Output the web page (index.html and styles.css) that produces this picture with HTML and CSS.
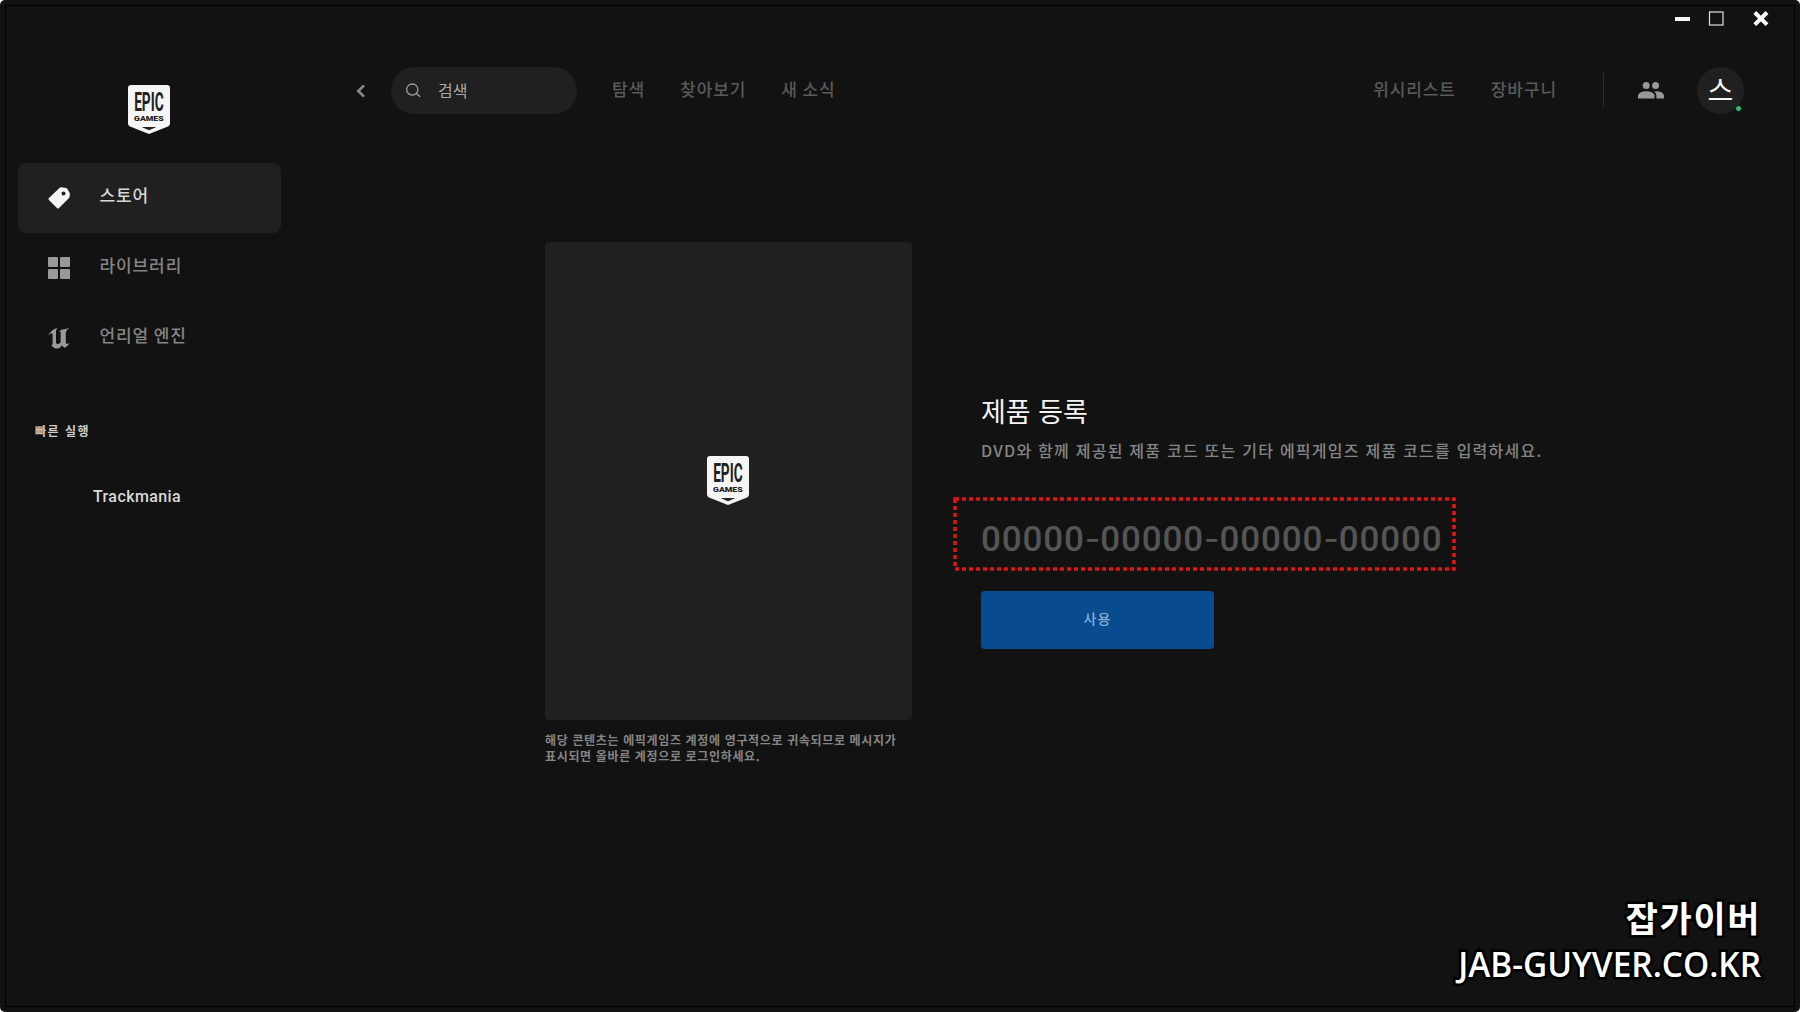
FILE: index.html
```html
<!DOCTYPE html>
<html lang="ko">
  <head>
    <meta charset="UTF-8" />
    <meta name="viewport" content="width=device-width, initial-scale=1.0" />
    <title>제품 등록</title>
    <link rel="stylesheet" href="styles.css">
  </head>
  <body>
    <div class="frame">
      <div class="window">
        <aside class="sidebar">
          <svg class="logo" width="42" height="49" viewBox="0 0 42 49">
            <path d="M3 0H39Q42 0 42 3V38.5Q42 40.5 40 41.4L21 49L2 41.4Q0 40.5 0 38.5V3Q0 0 3 0Z" fill="#f5f5f5" />
            <text class="logo-epic" x="6.2" y="25.6" textLength="29.4" lengthAdjust="spacingAndGlyphs">EPIC</text>
            <text class="logo-games" x="6" y="36" textLength="29.6" lengthAdjust="spacingAndGlyphs">GAMES</text>
            <path d="M13.5 42H28.5L21 45.2Z" fill="#222" />
          </svg>
          <nav class="side-nav">
            <a class="side-item active">
              <svg width="22" height="22" viewBox="0 0 22 22">
                <path fill="currentColor" fill-rule="evenodd" d="M12 0.6Q12.6 0.1 13.4 0.2L17.8 1Q18.8 1.2 19.4 2L21.5 5.6Q21.8 6.1 21.8 6.8L21.7 9.4Q21.6 10.3 21 11L10.8 21.2Q10 22 9.2 21.2L0.7 12.7Q0 12 0.7 11.2ZM15.5 4.6A2 2 0 1 0 15.5 8.6A2 2 0 1 0 15.5 4.6Z" />
              </svg>
              <span>스토어</span>
            </a>
            <a class="side-item">
              <svg width="22" height="22" viewBox="0 0 22 22" fill="currentColor">
                <rect x="0" y="0" width="10" height="10" rx="1" />
                <rect x="12" y="0" width="10" height="10" rx="1" />
                <rect x="0" y="12" width="10" height="10" rx="1" />
                <rect x="12" y="12" width="10" height="10" rx="1" />
              </svg>
              <span>라이브러리</span>
            </a>
            <a class="side-item">
              <svg width="22" height="22" viewBox="0 0 22 22">
                <path fill="currentColor" d="M0 9Q2.8 2.7 9.6 0.8Q8 2.5 8 4.5V15.7Q8.4 17 9.8 17Q11.6 16.9 12.6 15.3V5.4Q12.6 4.3 11.2 4.6Q13.4 2 16 2.2Q18.8 1.9 21.4 0.4Q17.8 3.5 17.8 6V15.2Q18 16.9 19.4 16.9Q20.5 16.7 22 15.4Q20.3 19 16.5 20.8L13.8 18.4Q12.5 21.2 9 21.6Q5.8 21.6 3.4 18.2Q4.6 18.2 4.6 16.6V8.3Q4.5 6.1 3.2 6.3Q1.5 6.8 0 9Z" />
              </svg>
              <span>언리얼 엔진</span>
            </a>
          </nav>
          <div class="quick-title">빠른 실행</div>
          <div class="quick-item">Trackmania</div>
        </aside>
        <main class="main">
          <div class="titlebar">
            <svg width="94" height="16" viewBox="0 0 94 16" fill="none">
              <path d="M0 9H15" stroke="#f5f5f5" stroke-width="4" />
              <rect x="34.5" y="2" width="13.5" height="13" stroke="#e0e0e0" stroke-width="1.2" />
              <path d="M79.8 2.5L92 14.7M92 2.5L79.8 14.7" stroke="#fff" stroke-width="4" />
            </svg>
          </div>
          <header class="header">
            <svg class="back" width="10" height="14" viewBox="0 0 10 14" fill="none">
              <path d="M8 1.3L2.3 7L8 12.7" stroke="#8a8a8a" stroke-width="2.6" />
            </svg>
            <div class="search">
              <svg width="15" height="15" viewBox="0 0 15 15" fill="none" stroke="#a0a0a0" stroke-width="1.3">
                <circle cx="6.3" cy="6.6" r="5.6" />
                <path d="M10.3 10.6L14.2 13.8" />
              </svg>
              <span>검색</span>
            </div>
            <nav class="top-nav">
              <a>탐색</a>
              <a>찾아보기</a>
              <a>새 소식</a>
            </nav>
            <nav class="user-nav">
              <a>위시리스트</a>
              <a>장바구니</a>
            </nav>
            <div class="divider"></div>
            <svg class="friends" width="26" height="17" viewBox="0 0 26 17" fill="#999">
              <circle cx="8.2" cy="3.6" r="3.5" />
              <circle cx="17.6" cy="3.6" r="3.5" />
              <path d="M0 16.6V13.2Q1.4 9.4 8.3 9.2Q15.2 9.4 16.5 13.2V16.6Z" />
              <path d="M16.2 9.4Q24.6 8.9 26 13.2V16.6H18.4V13.2Q18.3 11 16.2 9.4Z" />
            </svg>
            <div class="avatar">스<span class="status"></span></div>
          </header>
          <section class="content">
            <div class="product">
              <div class="cover">
                <svg width="42" height="49" viewBox="0 0 42 49">
                  <path d="M3 0H39Q42 0 42 3V38.5Q42 40.5 40 41.4L21 49L2 41.4Q0 40.5 0 38.5V3Q0 0 3 0Z" fill="#f5f5f5" />
                  <text class="logo-epic" x="6.2" y="25.6" textLength="29.4" lengthAdjust="spacingAndGlyphs">EPIC</text>
                  <text class="logo-games" x="6" y="36" textLength="29.6" lengthAdjust="spacingAndGlyphs">GAMES</text>
                  <path d="M13.5 42H28.5L21 45.2Z" fill="#222" />
                </svg>
              </div>
              <p class="notice">해당 콘텐츠는 에픽게임즈 계정에 영구적으로 귀속되므로 메시지가<br />표시되면 올바른 계정으로 로그인하세요.</p>
            </div>
            <div class="redeem">
              <h1>제품 등록</h1>
              <p class="desc">DVD와 함께 제공된 제품 코드 또는 기타 에픽게임즈 제품 코드를 입력하세요.</p>
              <div class="code">
                <svg class="code-box" width="503" height="74" fill="none">
                  <rect x="2" y="2" width="499" height="70" stroke="#e01616" stroke-width="3.6" stroke-dasharray="4 3" />
                </svg>
                00000<i>-</i>00000<i>-</i>00000<i>-</i>00000
              </div>
              <button class="submit">사용</button>
            </div>
          </section>
        </main>
      </div>
      <div class="watermark">
        <div class="mark-name">잡가이버</div>
        <div class="mark-url">JAB-GUYVER.CO.KR</div>
      </div>
    </div>
  </body>
</html>
```

FILE: styles.css
```css
* {
  box-sizing: border-box;
}
body {
  margin: 0;
  background: #fff;
  font-family: "Noto Sans CJK KR", sans-serif;
  color: #f5f5f5;
}
h1,
p {
  margin: 0;
}
svg {
  overflow: visible;
}
.logo-epic {
  font: 700 26px "Liberation Sans Narrow", Roboto, sans-serif;
  fill: #222;
}
.logo-games {
  font: 900 8px Roboto, sans-serif;
  fill: #222;
}
.frame {
  position: relative;
  width: 1800px;
  height: 1012px;
  padding: 5px;
  background: #121212;
  border-radius: 5px;
  overflow: hidden;
}
.window {
  display: flex;
  height: 1002px;
  border: 1px solid #000;
}

/* sidebar */
.sidebar {
  width: 292px;
  padding: 78.5px 0 0 11.5px;
}
.logo {
  display: block;
  margin: 0 0 29.5px 110.5px;
}
.side-item {
  display: flex;
  align-items: center;
  gap: 30px;
  width: 263px;
  height: 70px;
  padding-left: 30px;
  border-radius: 8px;
  color: #999;
  font-size: 17px;
  font-weight: 500;
  letter-spacing: 0.9px;
}
.side-item span {
  line-height: 20px;
  padding-bottom: 6px;
  word-spacing: -1px;
  color: #858585;
}
.side-item.active {
  background: #202020;
  color: #f5f5f5;
}
.side-item.active span {
  color: #d8d8d8;
}
.quick-title {
  margin: 48px 0 0 17.5px;
  font-size: 12px;
  font-weight: 700;
  line-height: 20px;
  letter-spacing: 1.5px;
  color: #ccc;
}
.quick-item {
  margin: 46px 0 0 75.5px;
  font: 500 16px/20px Roboto, sans-serif;
  letter-spacing: 0.4px;
  color: #d8d8d8;
}

/* header */
.main {
  flex: 1;
}
.titlebar {
  display: flex;
  justify-content: flex-end;
  height: 30px;
  padding: 4px 25px 0 0;
}
.header {
  display: flex;
  align-items: center;
  height: 109px;
  padding: 0 50px 0 58px;
}
.search {
  display: flex;
  align-items: center;
  gap: 17px;
  width: 186px;
  height: 47px;
  margin-left: 25px;
  padding-left: 15px;
  border-radius: 24px;
  background: #202020;
  font-size: 16px;
  color: #aaa;
}
.search span {
  line-height: 20px;
  padding-bottom: 2px;
}
.top-nav,
.user-nav {
  display: flex;
  gap: 35px;
  padding-bottom: 4px;
  font-size: 17px;
  font-weight: 500;
  line-height: 20px;
  letter-spacing: 0.9px;
  word-spacing: -1px;
  color: #5a5a5a;
}
.top-nav {
  margin-left: 35px;
}
.user-nav {
  margin-left: auto;
}
.divider {
  width: 1px;
  height: 35px;
  margin-left: 46px;
  background: #2a2a2a;
}
.friends {
  margin-left: 34px;
}
.avatar {
  position: relative;
  width: 47px;
  height: 47px;
  margin-left: 33px;
  border-radius: 50%;
  background: #202020;
  font-size: 28px;
  line-height: 45px;
  text-align: center;
}
.status {
  position: absolute;
  right: 2px;
  bottom: 2px;
  width: 7px;
  height: 7px;
  border: 1px solid #121212;
  border-radius: 50%;
  background: #2fbf71;
}

/* product registration */
.content {
  display: flex;
  gap: 69px;
  padding: 97px 0 0 247px;
}
.product {
  width: 367px;
}
.cover {
  display: flex;
  align-items: center;
  justify-content: center;
  height: 478px;
  padding: 0 2px 1px 0;
  border-radius: 4px;
  background: #202020;
}
.notice {
  margin-top: 12px;
  font-size: 12px;
  font-weight: 700;
  line-height: 16px;
  letter-spacing: 0.65px;
  white-space: nowrap;
  color: #858585;
}
.redeem {
  padding-top: 151px;
}
h1 {
  font-size: 27px;
  font-weight: 400;
  line-height: 36px;
}
.desc {
  margin-top: 9px;
  font-size: 16px;
  font-weight: 500;
  line-height: 24px;
  letter-spacing: 1.24px;
  white-space: nowrap;
  color: #858585;
}
.code {
  position: relative;
  height: 74px;
  margin-top: 35px;
  font: 500 35px/85px Roboto, sans-serif;
  letter-spacing: 0.85px;
  white-space: nowrap;
  color: #555;
}
.code i {
  display: inline-block;
  width: 15.5px;
  font: 400 34px/40px Inter, sans-serif;
  letter-spacing: 0;
  text-align: center;
}
.code-box {
  position: absolute;
  left: -28px;
  top: 0;
}
.submit {
  display: block;
  width: 233px;
  height: 58px;
  margin-top: 19.5px;
  padding: 0 0 4px;
  border: 0;
  border-radius: 4px;
  background: #084c8f;
  font: 500 14px "Noto Sans CJK KR", sans-serif;
  letter-spacing: 1px;
  color: #8db0d2;
}

.watermark {
  position: absolute;
  right: 39px;
  bottom: 25px;
  text-align: right;
  color: #fff;
  -webkit-text-stroke: 5px #000;
  paint-order: stroke fill;
}
.mark-name {
  font-size: 35px;
  font-weight: 700;
  line-height: 46px;
  letter-spacing: 1.6px;
  padding-bottom: 1px;
}
.mark-url {
  font: 600 33.4px/46px "Open Sans", sans-serif;
}
```
